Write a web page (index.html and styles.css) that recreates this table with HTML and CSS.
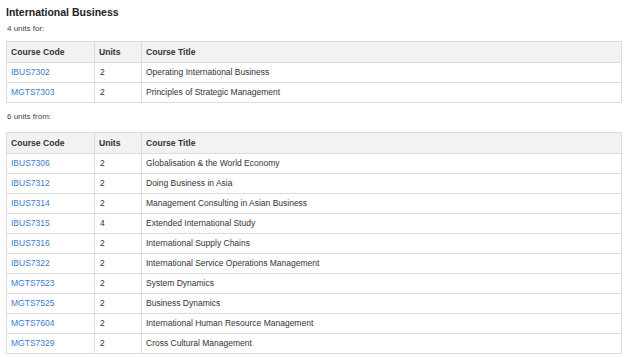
FILE: index.html
```html
<!DOCTYPE html>
<html>
<head>
<meta charset="utf-8">
<link rel="stylesheet" href="styles.css">
</head>
<body>
<div class="section">
  <h2 class="title">International Business</h2>
  <p class="note">4 units for:</p>
  <table class="courses">
    <thead>
      <tr><th class="c-code">Course Code</th><th class="c-units">Units</th><th>Course Title</th></tr>
    </thead>
    <tbody>
      <tr><td><a href="#">IBUS7302</a></td><td>2</td><td>Operating International Business</td></tr>
      <tr><td><a href="#">MGTS7303</a></td><td>2</td><td>Principles of Strategic Management</td></tr>
    </tbody>
  </table>
  <p class="note note-gap">6 units from:</p>
  <table class="courses">
    <thead>
      <tr><th class="c-code">Course Code</th><th class="c-units">Units</th><th>Course Title</th></tr>
    </thead>
    <tbody>
      <tr><td><a href="#">IBUS7306</a></td><td>2</td><td>Globalisation &amp; the World Economy</td></tr>
      <tr><td><a href="#">IBUS7312</a></td><td>2</td><td>Doing Business in Asia</td></tr>
      <tr><td><a href="#">IBUS7314</a></td><td>2</td><td>Management Consulting in Asian Business</td></tr>
      <tr><td><a href="#">IBUS7315</a></td><td>4</td><td>Extended International Study</td></tr>
      <tr><td><a href="#">IBUS7316</a></td><td>2</td><td>International Supply Chains</td></tr>
      <tr><td><a href="#">IBUS7322</a></td><td>2</td><td>International Service Operations Management</td></tr>
      <tr><td><a href="#">MGTS7523</a></td><td>2</td><td>System Dynamics</td></tr>
      <tr><td><a href="#">MGTS7525</a></td><td>2</td><td>Business Dynamics</td></tr>
      <tr><td><a href="#">MGTS7604</a></td><td>2</td><td>International Human Resource Management</td></tr>
      <tr><td><a href="#">MGTS7329</a></td><td>2</td><td>Cross Cultural Management</td></tr>
    </tbody>
  </table>
</div>
</body>
</html>
```
FILE: styles.css
```css
html, body {
  margin: 0;
  background: #fff;
}
body {
  font-family: "Liberation Sans", Arial, sans-serif;
  color: #333;
  padding: 5px 3px 0 6px;
}
.title {
  margin: 0;
  font-size: 10.5px;
  line-height: 14px;
  font-weight: bold;
  color: #222;
}
.note {
  margin: 4px 0 0 1px;
  font-size: 8px;
  line-height: 12px;
  color: #444;
}
.note-gap {
  margin-top: 8px;
}
.courses {
  width: 100%;
  border-collapse: collapse;
  margin-top: 6px;
  font-size: 8.5px;
}
.note-gap + .courses {
  margin-top: 9px;
}
.courses th,
.courses td {
  border: 1px solid #dcdcdc;
  text-align: left;
  vertical-align: middle;
  padding: 4px 4px;
  line-height: 11px;
}
.courses th {
  background: #f2f2f2;
  font-weight: bold;
  font-size: 8.6px;
  line-height: 12px;
  color: #333;
}
.c-code {
  width: 79px;
}
.c-units {
  width: 38px;
}
.courses td:nth-child(2) {
  padding-left: 5px;
}
.courses a {
  color: #3d7cc9;
  text-decoration: none;
}
```
